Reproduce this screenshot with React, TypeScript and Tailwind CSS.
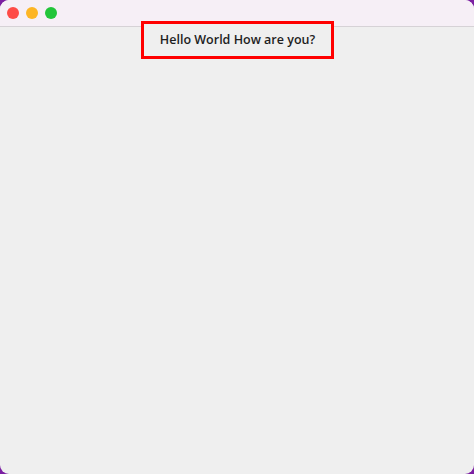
export default function App() {
  return (
    <div className="h-[474px] w-[474px] bg-[#7b1fa2]">
      <div className="flex h-full w-full flex-col overflow-hidden rounded-[9px] bg-[#efefef]">
        {/* barra de título */}
        <div className="flex h-[27px] shrink-0 items-center gap-[7px] border-b border-[#d6d2d6] bg-[#f6eff6] pl-[7px]">
          <span className="h-[12px] w-[12px] rounded-full bg-[#fe4b47]" />
          <span className="h-[12px] w-[12px] rounded-full bg-[#fdb524]" />
          <span className="h-[12px] w-[12px] rounded-full bg-[#22c53a]" />
        </div>

        <div className="-mt-[6px] flex justify-center pl-[1px]">
          <div className="flex h-[38px] w-[193px] items-center justify-center border-[3px] border-[#ff0000] bg-[#efefef] font-['Open_Sans',sans-serif] text-[12.5px] font-semibold text-[#1e1e1e]">
            Hello World How are you?
          </div>
        </div>
      </div>
    </div>
  );
}
